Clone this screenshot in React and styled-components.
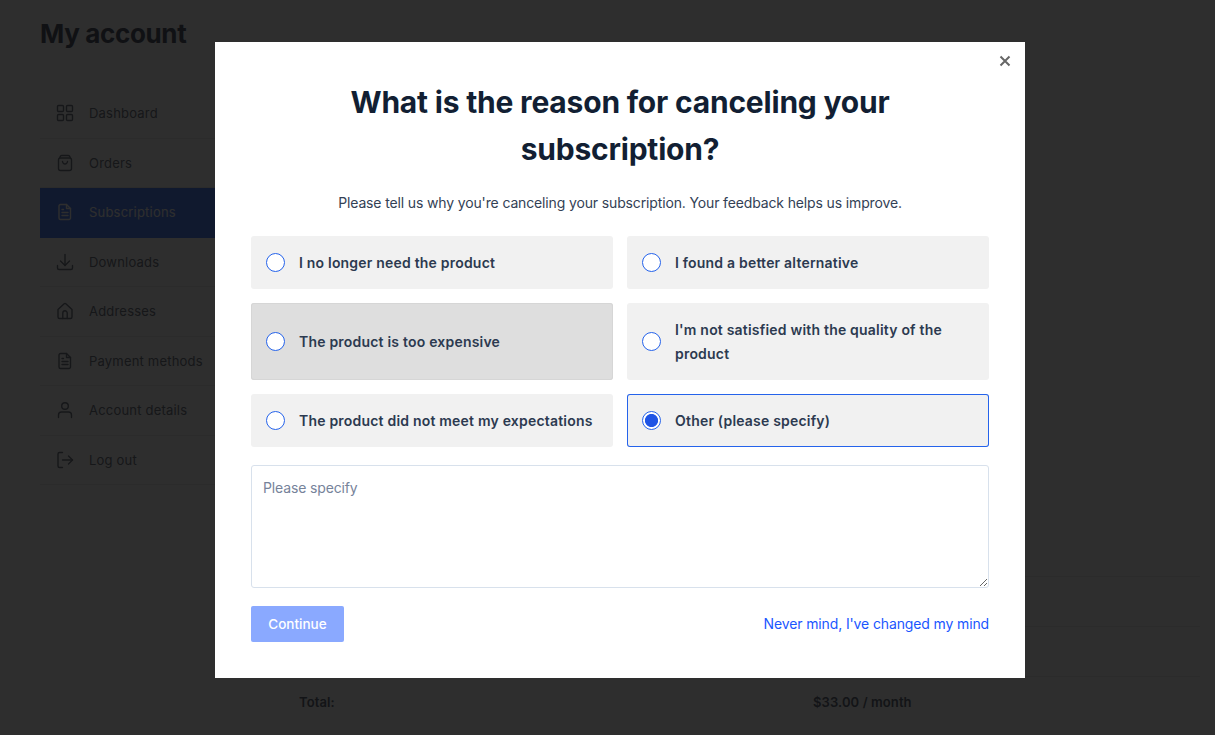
import React, { useState } from "react";
import styled, { createGlobalStyle } from "styled-components";

const Global = createGlobalStyle`
  html, body { margin: 0; height: 100%; overflow: hidden; background: #fff; }
  body { font-family: Inter, "Noto Sans", sans-serif; }
  * { box-sizing: border-box; }
`;

const Page = styled.div`
  height: 735px;
  padding: 16px 15px 0 40px;
  overflow: hidden;
`;

const PageTitle = styled.h1`
  margin: 0 0 37px;
  height: 36px;
  font-size: 26px;
  line-height: 36px;
  font-weight: 700;
  letter-spacing: -0.35px;
  color: #5b6270;
`;

const Columns = styled.div`
  display: flex;
  gap: 10px;
`;

const Sidebar = styled.ul`
  width: 225px;
  flex: none;
  margin: 0;
  padding: 0;
  list-style: none;
`;

const SideItem = styled.li`
  display: flex;
  align-items: center;
  gap: 14px;
  height: 49.5px;
  padding-left: 15px;
  font-size: 13px;
  letter-spacing: 0.2px;
  color: ${(p) => (p.$active ? "#fff" : "#7a808c")};
  background: ${(p) => (p.$active ? "#5c8bff" : "transparent")};
  border-bottom: 1px solid ${(p) => (p.$active ? "transparent" : "#eeeeee")};
  svg {
    width: 20px;
    height: 20px;
    flex: none;
    fill: none;
    stroke: currentColor;
    stroke-width: 1.4;
    stroke-linecap: round;
    stroke-linejoin: round;
  }
`;

const Main = styled.div`
  flex: 1;
  padding-top: 438px;
`;

const SummaryRow = styled.div`
  display: grid;
  grid-template-columns: 514px 1fr;
  align-items: center;
  height: 50px;
  padding-left: 24px;
  font-size: 13px;
  font-weight: 600;
  letter-spacing: 0.1px;
  color: #6b7280;
  border-bottom: 1px solid ${(p) => (p.$last ? "transparent" : "#eeeeee")};
`;

const Overlay = styled.div`
  position: fixed;
  inset: 0;
  padding: 42px 190px 0 215px;
  background: rgba(0, 0, 0, 0.82);
`;

const Modal = styled.div`
  position: relative;
  width: 810px;
  height: 636px;
  padding: 37px 36px 36px;
  background: #fff;
`;

const CloseButton = styled.button`
  position: absolute;
  top: 13px;
  right: 14px;
  width: 12px;
  height: 12px;
  padding: 0;
  border: 0;
  background: none;
  color: #666;
  svg {
    display: block;
  }
`;

const Title = styled.h2`
  margin: 0 auto 18px;
  width: 600px;
  font-size: 30px;
  line-height: 47px;
  font-weight: 700;
  letter-spacing: -0.2px;
  text-align: center;
  color: #121f33;
`;

const Subtitle = styled.p`
  margin: 0 0 21px;
  font-size: 14px;
  line-height: 24px;
  letter-spacing: -0.14px;
  text-align: center;
  color: #334155;
`;

const Options = styled.div`
  display: grid;
  grid-template-columns: 1fr 1fr;
  gap: 14px;
  margin-bottom: 18px;
`;

const Option = styled.label`
  display: flex;
  align-items: center;
  gap: 14px;
  min-height: 53px;
  padding: 14.5px 15px;
  border-radius: 3px;
  font-size: 14px;
  line-height: 24px;
  font-weight: 600;
  letter-spacing: 0.2px;
  color: #2c3a50;
  background: ${(p) => (p.$hovered ? "#dedede" : "#f1f1f1")};
  box-shadow: ${(p) => {
    if (p.$checked) return "inset 0 0 0 1px #2563eb";
    return p.$hovered ? "inset 0 0 0 1px #d6d6d6" : "none";
  }};
`;

const Radio = styled.input`
  appearance: none;
  flex: none;
  width: 19px;
  height: 19px;
  margin: 0;
  border: 1.5px solid #2563eb;
  border-radius: 50%;
  background: #fff;
  &:checked {
    background: radial-gradient(circle, #2055e5 0 6.2px, #fff 6.9px);
  }
`;

const Specify = styled.textarea`
  display: block;
  width: 100%;
  height: 123px;
  margin-bottom: 18px;
  padding: 11px 11px;
  border: 1px solid #d8e1ec;
  border-radius: 3px;
  outline: none;
  font-family: inherit;
  font-size: 14px;
  line-height: 22px;
  letter-spacing: -0.14px;
  color: #334155;
  &::placeholder {
    color: #76839a;
    opacity: 1;
  }
`;

const Actions = styled.div`
  display: flex;
  align-items: center;
  justify-content: space-between;
`;

const ContinueButton = styled.button`
  width: 93px;
  height: 36px;
  border: 0;
  border-radius: 2px;
  background: #8aa9ff;
  font-family: inherit;
  font-size: 13.500px;
  font-weight: 500;
  color: #fff;
`;

const BackLink = styled.a`
  padding-bottom: 2px;
  font-size: 14px;
  letter-spacing: -0.13px;
  color: #1a56ff;
  text-decoration: none;
`;

const icons = {
  grid: (
    <>
      <rect x="2.5" y="2.5" width="6" height="6" rx="1" />
      <rect x="11.5" y="2.5" width="6" height="6" rx="1" />
      <rect x="2.5" y="11.5" width="6" height="6" rx="1" />
      <rect x="11.5" y="11.5" width="6" height="6" rx="1" />
    </>
  ),
  bag: (
    <>
      <rect x="3.5" y="5" width="13" height="12.500" rx="2" />
      <path d="M4.500 5l1-1.800a1.500 1.500 0 0 1 1.300-.7h6.400a1.500 1.500 0 0 1 1.300.7l1 1.800" />
      <path d="M7.500 8.500c.3 1.700 1.200 2.500 2.500 2.500s2.200-.8 2.500-2.500" />
    </>
  ),
  file: (
    <>
      <path d="M5.500 2.500h6l4 4v9.500a1.500 1.500 0 0 1-1.500 1.500H5.500A1.500 1.500 0 0 1 4 16V4a1.500 1.500 0 0 1 1.500-1.500z" />
      <path d="M11.500 2.500v4h4" />
      <path d="M7 10.500h6M7 13.500h6M7 7.500h1.500" />
    </>
  ),
  download: (
    <>
      <path d="M10 2.500v11" />
      <path d="M5.500 9l4.500 4.500L14.500 9" />
      <path d="M2.500 13.500V16A1.500 1.500 0 0 0 4 17.500h12a1.500 1.500 0 0 0 1.500-1.500v-2.500" />
    </>
  ),
  home: (
    <>
      <path d="M3 8.500L8.900 2.900a1.600 1.600 0 0 1 2.200 0L17 8.500V16a1.500 1.500 0 0 1-1.500 1.500h-11A1.500 1.500 0 0 1 3 16z" />
      <path d="M7.800 17.500V12a2.200 2.200 0 0 1 4.400 0v5.500" />
    </>
  ),
  user: (
    <>
      <circle cx="10" cy="6" r="3.300" />
      <path d="M3.500 17.500V15a3 3 0 0 1 3-3h7a3 3 0 0 1 3 3v2.500" />
    </>
  ),
  logout: (
    <>
      <path d="M7.500 2.500H4.500A1.500 1.500 0 0 0 3 4v12a1.500 1.500 0 0 0 1.500 1.500h3" />
      <path d="M7.500 10h10" />
      <path d="M13.500 6l4 4-4 4" />
    </>
  ),
};

const navItems = [
  { label: "Dashboard", icon: "grid" },
  { label: "Orders", icon: "bag" },
  { label: "Subscriptions", icon: "file", active: true },
  { label: "Downloads", icon: "download" },
  { label: "Addresses", icon: "home" },
  { label: "Payment methods", icon: "file" },
  { label: "Account details", icon: "user" },
  { label: "Log out", icon: "logout" },
];

const reasons = [
  { id: "no-need", label: "I no longer need the product" },
  { id: "alternative", label: "I found a better alternative" },
  { id: "expensive", label: "The product is too expensive", hovered: true },
  { id: "quality", label: "I'm not satisfied with the quality of the product" },
  { id: "expectations", label: "The product did not meet my expectations" },
  { id: "other", label: "Other (please specify)" },
];

export default function App() {
  const [reason, setReason] = useState("other");

  return (
    <>
      <Global />
      <Page>
        <PageTitle>My account</PageTitle>
        <Columns>
          <Sidebar>
            {navItems.map((item) => (
              <SideItem key={item.label} $active={item.active}>
                <svg viewBox="0 0 20 20">{icons[item.icon]}</svg>
                {item.label}
              </SideItem>
            ))}
          </Sidebar>
          <Main>
            <SummaryRow />
            <SummaryRow />
            <SummaryRow />
            <SummaryRow $last>
              <span>Total:</span>
              <span>$33.00 / month</span>
            </SummaryRow>
          </Main>
        </Columns>
      </Page>
      <Overlay>
        <Modal>
          <CloseButton aria-label="Close">
            <svg width="12" height="12" viewBox="0 0 12 12">
              <path d="M1.500 1.500l9 9M10.500 1.500l-9 9" stroke="currentColor" strokeWidth="2" />
            </svg>
          </CloseButton>
          <Title>What is the reason for canceling your subscription?</Title>
          <Subtitle>Please tell us why you're canceling your subscription. Your feedback helps us improve.</Subtitle>
          <Options>
            {reasons.map((r) => (
              <Option key={r.id} $checked={reason === r.id} $hovered={r.hovered}>
                <Radio
                  type="radio"
                  name="reason"
                  checked={reason === r.id}
                  onChange={() => setReason(r.id)}
                />
                {r.label}
              </Option>
            ))}
          </Options>
          <Specify placeholder="Please specify" />
          <Actions>
            <ContinueButton>Continue</ContinueButton>
            <BackLink href="#">Never mind, I've changed my mind</BackLink>
          </Actions>
        </Modal>
      </Overlay>
    </>
  );
}
